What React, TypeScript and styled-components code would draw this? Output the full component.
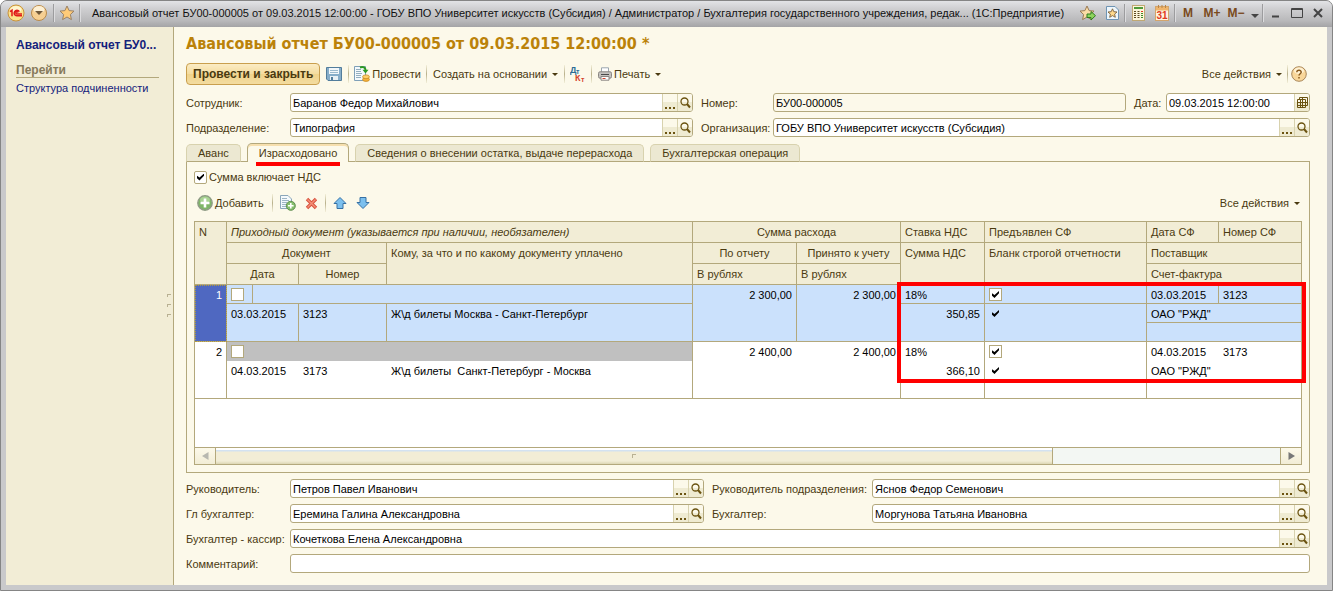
import React from "react";
import styled, { createGlobalStyle, css } from "styled-components";

const c = {
  line: "#b3a87c",
  soft: "#d8d2ae",
  page: "#fcf9ea",
  head: "#f2edd6",
  text: "#4a3a10",
  red: "#ff0000",
  selected: "#cbe1fc",
};

const Global = createGlobalStyle`
  *, *::before, *::after { box-sizing: border-box; }
  body { margin: 0; background: #fff; font: 11px/14px "Liberation Sans", Arial, sans-serif; color: ${c.text}; }
  button, input { font: inherit; color: inherit; margin: 0; }
  h1, h2 { margin: 0; }
`;

const Window = styled.div`
  min-height: 100vh;
  display: flex;
  flex-direction: column;
  border: 1px solid #858585;
  border-radius: 7px 7px 0 0;
  background: #c9c9cb;
  overflow: hidden;
`;

const TitleBar = styled.header`
  display: flex;
  align-items: center;
  height: 26px;
  padding: 0 2px 2px 6px;
  background: linear-gradient(#e2e3e6 0, #cfcfd1 30%, #b9b9bb 75%, #a4a4a6 100%);
`;

const WindowTitle = styled.span`
  flex: 1;
  min-width: 0;
  padding-left: 11px;
  overflow: hidden;
  white-space: nowrap;
  text-overflow: ellipsis;
  color: #111;
`;

const BarButton = styled.button<{ $w?: number }>`
  display: flex;
  align-items: center;
  justify-content: center;
  flex: none;
  width: ${(p) => p.$w ?? 24}px;
  height: 22px;
  padding: 0;
  border: 0;
  background: none;
  font-weight: bold;
  font-size: 12px;
  color: #7a4a1c;
  svg { display: block; }
`;

const BarDivider = styled.span`
  flex: none;
  width: 2px;
  height: 18px;
  background: linear-gradient(to right, #9c9c9e 50%, #dcdcde 50%);
`;

const Body = styled.div`
  flex: 1;
  display: flex;
  margin: 0 5px 5px;
  background: ${c.page};
`;

const Sidebar = styled.nav`
  display: flex;
  flex-direction: column;
  flex: none;
  width: 168px;
  padding: 11px 14px 0 10px;
  border-right: 1px solid ${c.line};
  background: ${c.head};
  position: relative;
`;

const SideTitle = styled.h2`
  white-space: nowrap;
  font-size: 12px;
  line-height: 14px;
  color: #14227c;
`;

const SideGroup = styled.div`
  margin: 11px 0 3px;
  border-bottom: 1px solid ${c.line};
  font-weight: bold;
  font-size: 12px;
  line-height: 14px;
  color: #86795a;
`;

const SideLink = styled.a`
  color: #14227c;
  text-decoration: none;
  white-space: nowrap;
`;

const Grip = styled.span`
  position: absolute;
  right: 2px;
  top: 267px;
  display: grid;
  gap: 7px;
  i {
    width: 4px;
    height: 3px;
    border: 1px solid #b9b193;
    border-width: 1px 0 0 1px;
  }
`;

const Main = styled.main`
  flex: 1;
  min-width: 0;
  display: flex;
  flex-direction: column;
  padding: 6px 17px 12px 12px;
`;

const PageTitle = styled.h1`
  font: bold 16px/22px "DejaVu Sans Condensed", "DejaVu Sans", sans-serif;
  color: #bb8209;
  white-space: nowrap;
`;

const Toolbar = styled.div`
  display: flex;
  align-items: center;
  height: 22px;
`;

const MainToolbar = styled(Toolbar)`
  margin: 8px 0;
`;

const TableToolbar = styled(Toolbar)`
  gap: 5px;
  margin: 8px 0 7px;
`;

const Spacer = styled.span`
  flex: 1;
`;

const ToolButton = styled.button<{ $pad?: number }>`
  display: flex;
  align-items: center;
  gap: 2px;
  height: 22px;
  padding: 0 ${(p) => p.$pad ?? 5}px;
  border: 0;
  background: none;
  white-space: nowrap;
  svg { display: block; flex: none; }
`;

const PrimaryButton = styled.button`
  height: 22px;
  padding: 0 6px;
  border: 1px solid #c99f4d;
  border-radius: 4px;
  background: linear-gradient(#fbecc4, #f4dc9e 50%, #f0d38b 50%, #f3dca0);
  font-weight: bold;
  font-size: 12px;
  white-space: nowrap;
`;

const Divider = styled.span`
  width: 1px;
  height: 18px;
  background: linear-gradient(#f3efd9, #b9b18c 50%, #f3efd9);
`;

const Caret = styled.span`
  border: 3px solid transparent;
  border-top-color: ${c.text};
  border-bottom: 0;
  margin-left: 3px;
`;

const FieldGrid = styled.div<{ $cols: string }>`
  display: grid;
  grid-template-columns: ${(p) => p.$cols};
  gap: 6px 8px;
`;

const Cell = styled.div<{ $wide?: boolean }>`
  display: flex;
  align-items: center;
  min-width: 0;
  ${(p) => p.$wide && css`grid-column: 1 / -1;`}
`;

const DateCell = styled.div`
  display: flex;
  align-items: center;
  flex: none;
  margin-left: 8px;
`;

const Label = styled.label<{ $w: number }>`
  flex: none;
  width: ${(p) => p.$w}px;
  white-space: nowrap;
`;

const Box = styled.div<{ $w?: number; $readOnly?: boolean }>`
  display: flex;
  flex: ${(p) => (p.$w ? `0 0 ${p.$w}px` : "1")};
  min-width: 0;
  height: 19px;
  border: 1px solid ${c.line};
  border-radius: 3px;
  background: ${(p) => (p.$readOnly ? c.page : "#fff")};
  overflow: hidden;
`;

const TextInput = styled.input`
  flex: 1;
  min-width: 0;
  padding: 0 2px;
  border: 0;
  outline: 0;
  background: none;
  color: #000;
`;

const BoxButton = styled.button`
  display: flex;
  align-items: center;
  justify-content: center;
  flex: none;
  width: 15px;
  padding: 0;
  border: 0;
  border-left: 1px solid ${c.soft};
  background: linear-gradient(${c.page} 45%, #efebd2 50%);
`;

const Tabs = styled.div`
  display: flex;
  align-items: flex-end;
  gap: 6px;
  height: 19px;
  margin: 6px 0 -1px;
  position: relative;
`;

const Tab = styled.button<{ $active?: boolean }>`
  height: ${(p) => (p.$active ? 19 : 18)}px;
  padding: 0 11px;
  border: 1px solid ${(p) => (p.$active ? c.line : c.soft)};
  border-bottom: ${(p) => (p.$active ? "0" : `1px solid ${c.line}`)};
  border-radius: 5px 5px 0 0;
  background: ${(p) => (p.$active ? c.page : "#ece8d2")};
  box-shadow: ${(p) => (p.$active ? "inset 0 2px #f6dfae" : "none")};
  position: relative;
  white-space: nowrap;
`;

const Underline = styled.span`
  position: absolute;
  left: 8px;
  right: 8px;
  bottom: -4px;
  height: 4px;
  background: ${c.red};
`;

const Panel = styled.section`
  flex: 1;
  display: flex;
  flex-direction: column;
  padding: 8px 7px 7px;
  margin-bottom: 6px;
  border: 1px solid ${c.line};
`;

const CheckLabel = styled.label`
  display: flex;
  align-items: center;
  gap: 2px;
`;

const Check = styled.input.attrs({ type: "checkbox" })<{ $bare?: boolean; $round?: boolean }>`
  appearance: none;
  flex: none;
  display: block;
  width: 13px;
  height: 13px;
  border: 1px solid ${(p) => (p.$bare ? "transparent" : c.line)};
  border-radius: ${(p) => (p.$round ? 2 : 0)}px;
  background-color: ${(p) => (p.$bare ? "transparent" : "#fff")};
  position: relative;
  &:checked::after {
    content: "";
    position: absolute;
    inset: 2px;
    background: #000;
    clip-path: polygon(0 32%, 36% 58%, 100% 0, 100% 32%, 36% 100%, 0 68%);
  }
`;

const TableFrame = styled.div`
  flex: 1;
  display: flex;
  flex-direction: column;
  border: 1px solid ${c.line};
  background: #fff;
  position: relative;
`;

const Table = styled.table`
  width: 100%;
  table-layout: fixed;
  border-collapse: separate;
  border-spacing: 0;
`;

const Th = styled.th<{ $center?: boolean; $last?: boolean }>`
  height: 21px;
  padding: 3px 4px 2px;
  border: 0 solid ${c.line};
  border-width: 0 ${(p) => (p.$last ? 0 : 1)}px 1px 0;
  background: ${c.head};
  font-weight: normal;
  text-align: ${(p) => (p.$center ? "center" : "left")};
  vertical-align: top;
  white-space: nowrap;
  line-height: 15px;
`;

// A missing grid line is made up for in the padding, so texts line up between rows.
type TdProps = { $right?: boolean; $r?: boolean; $b?: boolean; $bg?: string };
const Td = styled.td<TdProps>`
  height: 19px;
  padding: 3px ${(p) => (p.$r ? 4 : 5)}px ${(p) => (p.$b ? 1 : 2)}px 4px;
  border: 0 solid ${c.line};
  border-right-width: ${(p) => (p.$r ? 1 : 0)}px;
  border-bottom-width: ${(p) => (p.$b ? 1 : 0)}px;
  background: ${(p) => p.$bg ?? "transparent"};
  color: #000;
  text-align: ${(p) => (p.$right ? "right" : "left")};
  vertical-align: top;
  white-space: pre;
  line-height: 14px;
`;

const NumberTd = styled(Td)<{ $current?: boolean }>`
  ${(p) =>
    p.$current &&
    css`
      background: #4f68c1;
      color: #fff;
      outline: 1px dotted #b39a3c;
      outline-offset: -1px;
    `}
`;

const Highlight = styled.div`
  position: absolute;
  top: 60px;
  right: -5px;
  width: 409px;
  height: 101px;
  border: 4px solid ${c.red};
  pointer-events: none;
`;

const ScrollBar = styled.div`
  display: flex;
  height: 17px;
  margin-top: auto;
  border-top: 1px solid ${c.line};
  background: #f3f7f3;
`;

const ScrollButton = styled.button`
  width: 20px;
  padding: 0;
  border: 0;
  background: linear-gradient(${c.page}, ${c.head});
  display: flex;
  align-items: center;
  justify-content: center;
`;

const ScrollTrack = styled.div`
  flex: 1;
  display: flex;
  border: 1px solid ${c.line};
  border-width: 0 1px;
`;

const ScrollThumb = styled.div`
  flex: 0 0 78.7%;
  border-right: 1px solid ${c.line};
  background: linear-gradient(#fff 2px, #d3e2f1 2px 3px, ${c.head} 4px 13px, #dcd6b3);
  display: flex;
  align-items: center;
  justify-content: center;
  i {
    width: 4px;
    height: 4px;
    border: 1px solid #b9b193;
    border-width: 1px 0 0 1px;
  }
`;

const STAR = "M8 1 L10.1 5.6 L15 6.1 L11.4 9.5 L12.4 14.6 L8 12 L3.6 14.6 L4.6 9.5 L1 6.1 L5.9 5.6 Z";

const LogoIcon = () => (
  <svg width="18" height="18" viewBox="0 0 18 18">
    <circle cx="9" cy="9" r="8" fill="#fbe28a" stroke="#c8923c" />
    <ellipse cx="9" cy="5.5" rx="5.5" ry="3.5" fill="#fff6cf" />
    <path d="M3 7.6 L5 6.2 V12.2 M12.4 7.6 A2.8 2.8 0 1 0 9.8 11.8 H15 M11 8.6 A1.1 1.1 0 1 0 9.8 9.9 H15" fill="none" stroke="#e01b1b" strokeWidth="1.5" />
  </svg>
);
const MenuIcon = () => (
  <svg width="18" height="18" viewBox="0 0 18 18">
    <circle cx="9" cy="9" r="7.5" fill="#f6cf92" stroke="#b98a4a" />
    <ellipse cx="9" cy="5.5" rx="5.5" ry="3.5" fill="#fdf0d4" />
    <path d="M5 7 H13 L9 11Z" fill="#6f5738" />
  </svg>
);
const StarIcon = () => (
  <svg width="16" height="16" viewBox="0 0 16 16">
    <path d={STAR} fill="#ffcb78" stroke="#9a8266" />
  </svg>
);
const StarAddIcon = () => (
  <svg width="18" height="16" viewBox="0 0 18 16">
    <path d={STAR} fill="#fbdca6" stroke="#9a7b55" />
    <path d="M8 9 H12 V6.5 L16.5 10.7 L12 15 V12.5 H8Z" fill="#8ed35c" stroke="#2f7d1e" />
  </svg>
);
const StarPageIcon = () => (
  <svg width="13" height="16" viewBox="0 0 13 16">
    <path d="M.5 1.5 H9 L12.5 5 V14.5 H.5Z" fill="#eef6fb" stroke="#6e94b4" />
    <path d="M6.5 3.8 L7.8 6.7 L11 7 L8.6 9.1 L9.3 12.3 L6.5 10.6 L3.7 12.3 L4.4 9.1 L2 7 L5.2 6.7Z" fill="#ffd98c" stroke="#7a5f3a" strokeWidth=".9" />
  </svg>
);
const CalcIcon = () => (
  <svg width="13" height="16" viewBox="0 0 13 16">
    <rect x=".5" y=".5" width="12" height="15" fill="#fdf6da" stroke="#c0a873" />
    <rect x="2" y="2" width="9" height="2" fill="#4f9a3a" />
    {[6.5, 8.5, 10.5, 12.5].map((y) => (
      <path key={y} d={`M2 ${y}h2m1.5 0h2`} stroke="#5d4a20" />
    ))}
    <path d="M9 6.5h2" stroke="#e03a22" />
    <path d="M9 8.5h2M9 10.5h2M9 12.5h2" stroke="#3f8a2a" />
  </svg>
);
const CalendarIcon = () => (
  <svg width="14" height="16" viewBox="0 0 14 16">
    <rect x=".5" y="1.5" width="13" height="14" fill="#fff4e0" stroke="#d3a56c" />
    <rect x="1" y="2" width="12" height="3.5" fill="#f0b56c" />
    <path d="M3.5 0v3M7 0v3M10.5 0v3" stroke="#b98548" />
    <text x="7" y="14" textAnchor="middle" fontSize="10" fontFamily="Liberation Sans" fill="#e03a22">31</text>
  </svg>
);
const SaveIcon = () => (
  <svg width="16" height="16" viewBox="0 0 16 16">
    <path d="M.5 1.5 H15.5 V14.5 H2 L.5 13Z" fill="#86adc9" stroke="#527d9c" />
    <rect x="3" y="2" width="10" height="6" fill="#f2f7fa" />
    <path d="M4 4.5h8M4 6.5h8" stroke="#9bb9cd" />
    <rect x="4" y="10" width="8" height="4" fill="#e8f0f5" />
    <rect x="5" y="11" width="2" height="3" fill="#527d9c" />
  </svg>
);
const PostIcon = () => (
  <svg width="16" height="16" viewBox="0 0 16 16">
    <path d="M.5 .5 H11.5 V14.5 H.5Z" fill="#f4f9fc" stroke="#7fa0b8" />
    <path d="M2 3.5h5M2 5.5h5M2 7.5h6M2 9.5h5M2 11.5h5" stroke="#93aebf" />
    <path d="M6 1.5 C9 .5 11.5 1.5 11.5 4" fill="none" stroke="#2d9a22" strokeWidth="2" />
    <path d="M8.5 3.8 H14.5 L11.5 7.5Z" fill="#2d9a22" />
    <ellipse cx="12" cy="13.5" rx="3.4" ry="1.9" fill="#f5b13c" stroke="#c98a20" strokeWidth=".8" />
    <ellipse cx="12" cy="10.8" rx="3.4" ry="1.9" fill="#ffcf6a" stroke="#c98a20" strokeWidth=".8" />
  </svg>
);
const DtKtIcon = () => (
  <svg width="16" height="16" viewBox="0 0 16 16" fontFamily="Liberation Sans" fontWeight="bold">
    <text x="0" y="7" fontSize="9" fill="#2c6c96">Д</text>
    <text x="6" y="8" fontSize="7" fill="#2c6c96">т</text>
    <text x="5" y="15" fontSize="9" fill="#d5432c">К</text>
    <text x="11" y="16" fontSize="7" fill="#d5432c">т</text>
  </svg>
);
const PrintIcon = () => (
  <svg width="14" height="14" viewBox="0 0 14 14">
    <path d="M3.5 6 V.8 H10.5 V6" fill="#fff" stroke="#9aa5ae" />
    <rect x=".5" y="4.8" width="13" height="6.4" rx="1.5" fill="#c4c2bf" stroke="#8a8682" />
    <path d="M3 7.5h8" stroke="#4a4a4a" />
    <path d="M3 9.5 H11 V13.2 H3Z" fill="#fff" stroke="#8a8682" />
    <path d="M4.5 11.5h3" stroke="#d5432c" />
  </svg>
);
const HelpIcon = () => (
  <svg width="16" height="16" viewBox="0 0 16 16">
    <circle cx="8" cy="8" r="7.3" fill="#f9d79a" stroke="#a8865a" />
    <ellipse cx="8" cy="4.8" rx="5" ry="3.2" fill="#fff1d2" />
    <path d="M5.8 6.2 C5.8 3.4 10.3 3.6 10.2 6.2 C10.1 7.8 8 7.8 8 9.6 M8 11v1.6" fill="none" stroke="#8a5a1c" strokeWidth="1.5" />
  </svg>
);
const SearchIcon = () => (
  <svg width="11" height="12" viewBox="0 0 11 12">
    <circle cx="4.5" cy="4.5" r="3.5" fill="none" stroke="#6b5310" strokeWidth="1.3" />
    <path d="M7 7 L10 10.5" stroke="#6b5310" strokeWidth="2" />
  </svg>
);
const DotsIcon = () => (
  <svg width="10" height="12" viewBox="0 0 10 12">
    <path d="M0 10h2v2H0zM4 10h2v2H4zM8 10h2v2H8z" fill="#6b5310" />
  </svg>
);
const DateIcon = () => (
  <svg width="11" height="11" viewBox="0 0 11 11">
    <path d="M2.5 2.5v-2h8v8h-2M.5 2.5h8v8h-8zM.5 5.5h10M.5 8.5h8M3.5 2.5v8M5.5 .5v10" fill="none" stroke="#6b5310" />
  </svg>
);
const AddIcon = () => (
  <svg width="16" height="16" viewBox="0 0 16 16">
    <circle cx="8" cy="8" r="7.2" fill="#7fb668" stroke="#8f9b86" strokeWidth="1.4" />
    <ellipse cx="8" cy="5" rx="5" ry="3.4" fill="#a9d394" />
    <path d="M8 3.5v9M3.5 8h9" stroke="#fff" strokeWidth="2.6" />
  </svg>
);
const CopyIcon = () => (
  <svg width="16" height="16" viewBox="0 0 16 16">
    <path d="M.5 .5 H8 L11.5 4 V13.5 H.5Z" fill="#f4f9fc" stroke="#8aa6ba" />
    <path d="M2 3.5h5M2 5.5h7M2 7.5h5M2 9.5h4M2 11.5h4" stroke="#9db5c5" />
    <circle cx="10.8" cy="10.8" r="4.5" fill="#86bf6c" stroke="#5f8d50" />
    <path d="M10.8 8v5.6M8 10.8h5.6" stroke="#fff" strokeWidth="1.6" />
  </svg>
);
const DeleteIcon = () => (
  <svg width="13" height="13" viewBox="0 0 13 13">
    <path d="M2 2 L11 11 M11 2 L2 11" stroke="#d8513e" strokeWidth="3.4" />
    <path d="M2.5 2.5 L10.5 10.5 M10.5 2.5 L2.5 10.5" stroke="#f49078" strokeWidth="1.4" />
  </svg>
);
const ArrowIcon = ({ down }: { down?: boolean }) => (
  <svg width="14" height="14" viewBox="0 0 14 14">
    <path
      d={down ? "M4 1.5 H10 V6.5 H13 L7 12.5 L1 6.5 H4Z" : "M4 12.5 H10 V7.5 H13 L7 1.5 L1 7.5 H4Z"}
      fill="#7cc0ee"
      stroke="#3670a4"
    />
  </svg>
);

type FieldProps = {
  id: string;
  label: string;
  labelWidth: number;
  value: string;
  picker?: "ref" | "date";
  width?: number;
  readOnly?: boolean;
};

const Field = ({ id, label, labelWidth, value, picker, width, readOnly }: FieldProps) => (
  <>
    <Label htmlFor={id} $w={labelWidth}>{label}</Label>
    <Box $w={width} $readOnly={readOnly}>
      <TextInput id={id} defaultValue={value} readOnly={readOnly} />
      {picker === "ref" && (
        <>
          <BoxButton aria-label="Выбрать"><DotsIcon /></BoxButton>
          <BoxButton aria-label="Открыть"><SearchIcon /></BoxButton>
        </>
      )}
      {picker === "date" && <BoxButton aria-label="Календарь"><DateIcon /></BoxButton>}
    </Box>
  </>
);

const rows = [
  { n: 1, current: true, date: "03.03.2015", num: "3123", text: "Ж\\д билеты Москва - Санкт-Петербург", sum: "2 300,00", vat: "350,85" },
  { n: 2, current: false, date: "04.03.2015", num: "3173", text: "Ж\\д билеты  Санкт-Петербург - Москва", sum: "2 400,00", vat: "366,10" },
];

// The zero-width entry takes whatever room the other columns leave.
const columns = [32, 26, 46, 88, 0, 104, 104, 84, 162, 72, 82];

const RowGroup = ({ row }: { row: (typeof rows)[number] }) => {
  const on = row.current;
  const bg = on ? c.selected : undefined;
  const docBg = on ? c.selected : "#c0c0c0";
  return (
    <tbody>
      <tr>
        <NumberTd rowSpan={3} $right $r $b $current={on}>{row.n}</NumberTd>
        <Td $bg={docBg} $r={on} $b={on}><Check aria-label="Приходный документ" /></Td>
        <Td colSpan={3} $bg={docBg} $r $b={on} />
        <Td rowSpan={3} $bg={bg} $right $r={on} $b>{row.sum}</Td>
        <Td rowSpan={3} $bg={bg} $right $r $b>{row.sum}</Td>
        <Td $bg={bg} $r $b={on}>18%</Td>
        <Td $bg={bg} $r $b={on}><Check defaultChecked aria-label="Предъявлен СФ" /></Td>
        <Td $bg={bg} $r={on} $b={on}>{row.date}</Td>
        <Td $bg={bg} $b={on}>{row.num}</Td>
      </tr>
      <tr>
        <Td rowSpan={2} colSpan={2} $bg={bg} $r={on} $b>{row.date}</Td>
        <Td rowSpan={2} $bg={bg} $r={on} $b>{row.num}</Td>
        <Td rowSpan={2} $bg={bg} $r $b>{row.text}</Td>
        <Td rowSpan={2} $bg={bg} $right $r $b>{row.vat}</Td>
        <Td rowSpan={2} $bg={bg} $r $b><Check $bare defaultChecked aria-label="Бланк строгой отчетности" /></Td>
        <Td colSpan={2} $bg={bg} $b={on}>ОАО "РЖД"</Td>
      </tr>
      <tr>
        <Td colSpan={2} $bg={bg} $b />
      </tr>
    </tbody>
  );
};

export default function App() {
  return (
    <Window>
      <Global />
      <TitleBar>
        <BarButton $w={18} aria-label="1С"><LogoIcon /></BarButton>
        <BarButton $w={28} aria-label="Меню"><MenuIcon /></BarButton>
        <BarDivider />
        <BarButton aria-label="Избранное"><StarIcon /></BarButton>
        <BarDivider />
        <WindowTitle>
          Авансовый отчет БУ00-000005 от 09.03.2015 12:00:00 - ГОБУ ВПО Университет искусств (Субсидия) / Администратор / Бухгалтерия государственного учреждения, редак... (1С:Предприятие)
        </WindowTitle>
        <BarButton aria-label="Добавить в избранное"><StarAddIcon /></BarButton>
        <BarButton aria-label="Страница избранного"><StarPageIcon /></BarButton>
        <BarDivider />
        <BarButton aria-label="Калькулятор"><CalcIcon /></BarButton>
        <BarButton aria-label="Календарь"><CalendarIcon /></BarButton>
        <BarDivider />
        <BarButton>M</BarButton>
        <BarButton>M+</BarButton>
        <BarButton>M−</BarButton>
        <BarButton $w={14} aria-label="Ещё">
          <svg width="8" height="10"><path d="M0 6H8L4 10Z" fill="#444" /></svg>
        </BarButton>
        <BarDivider />
        <BarButton aria-label="Свернуть">
          <svg width="10" height="10"><path d="M1 8.5h7" stroke="#444" strokeWidth="2" /></svg>
        </BarButton>
        <BarButton $w={18} aria-label="Развернуть">
          <svg width="12" height="10"><path d="M.5 .5h11v9H.5zM.5 1.5h11" fill="none" stroke="#444" /></svg>
        </BarButton>
        <BarButton aria-label="Закрыть">
          <svg width="10" height="10"><path d="M1 1l8 8M9 1L1 9" stroke="#444" strokeWidth="2" /></svg>
        </BarButton>
      </TitleBar>
      <Body>
        <Sidebar>
          <SideTitle>Авансовый отчет БУ0...</SideTitle>
          <SideGroup>Перейти</SideGroup>
          <SideLink href="#structure">Структура подчиненности</SideLink>
          <Grip><i /><i /><i /></Grip>
        </Sidebar>
        <Main>
          <PageTitle>Авансовый отчет БУ00-000005 от 09.03.2015 12:00:00 *</PageTitle>
          <MainToolbar>
            <PrimaryButton>Провести и закрыть</PrimaryButton>
            <ToolButton $pad={6} aria-label="Записать"><SaveIcon /></ToolButton>
            <Divider />
            <ToolButton><PostIcon />Провести</ToolButton>
            <Divider />
            <ToolButton $pad={6}>Создать на основании<Caret /></ToolButton>
            <Divider />
            <ToolButton aria-label="Дт Кт"><DtKtIcon /></ToolButton>
            <Divider />
            <ToolButton $pad={6}><PrintIcon />Печать<Caret /></ToolButton>
            <Spacer />
            <ToolButton>Все действия<Caret /></ToolButton>
            <Divider />
            <ToolButton $pad={3} aria-label="Справка"><HelpIcon /></ToolButton>
          </MainToolbar>
          <FieldGrid $cols="507fr 609fr">
            <Cell><Field id="employee" label="Сотрудник:" labelWidth={104} value="Баранов Федор Михайлович" picker="ref" /></Cell>
            <Cell>
              <Field id="number" label="Номер:" labelWidth={72} value="БУ00-000005" readOnly />
              <DateCell>
                <Field id="date" label="Дата:" labelWidth={32} value="09.03.2015 12:00:00" picker="date" width={144} />
              </DateCell>
            </Cell>
            <Cell><Field id="dept" label="Подразделение:" labelWidth={104} value="Типография" picker="ref" /></Cell>
            <Cell><Field id="org" label="Организация:" labelWidth={72} value="ГОБУ ВПО Университет искусств (Субсидия)" picker="ref" /></Cell>
          </FieldGrid>
          <Tabs>
            <Tab>Аванс</Tab>
            <Tab $active>Израсходовано<Underline /></Tab>
            <Tab>Сведения о внесении остатка, выдаче перерасхода</Tab>
            <Tab>Бухгалтерская операция</Tab>
          </Tabs>
          <Panel>
            <CheckLabel><Check $round defaultChecked />Сумма включает НДС</CheckLabel>
            <TableToolbar>
              <ToolButton $pad={3}><AddIcon />Добавить</ToolButton>
              <Divider />
              <ToolButton $pad={2} aria-label="Скопировать"><CopyIcon /></ToolButton>
              <ToolButton $pad={2} aria-label="Удалить"><DeleteIcon /></ToolButton>
              <Divider />
              <ToolButton $pad={2} aria-label="Вверх"><ArrowIcon /></ToolButton>
              <ToolButton $pad={2} aria-label="Вниз"><ArrowIcon down /></ToolButton>
              <Spacer />
              <ToolButton $pad={2}>Все действия<Caret /></ToolButton>
            </TableToolbar>
            <TableFrame>
              <Table>
                <colgroup>
                  {columns.map((w, i) => (
                    <col key={i} width={w || undefined} />
                  ))}
                </colgroup>
                <thead>
                  <tr>
                    <Th rowSpan={3}>N</Th>
                    <Th colSpan={4}><em>Приходный документ (указывается при наличии, необязателен)</em></Th>
                    <Th colSpan={2} $center>Сумма расхода</Th>
                    <Th>Ставка НДС</Th>
                    <Th>Предъявлен СФ</Th>
                    <Th>Дата СФ</Th>
                    <Th $last>Номер СФ</Th>
                  </tr>
                  <tr>
                    <Th colSpan={3} $center>Документ</Th>
                    <Th rowSpan={2}>Кому, за что и по какому документу уплачено</Th>
                    <Th $center>По отчету</Th>
                    <Th $center>Принято к учету</Th>
                    <Th rowSpan={2}>Сумма НДС</Th>
                    <Th rowSpan={2}>Бланк строгой отчетности</Th>
                    <Th colSpan={2} $last>Поставщик</Th>
                  </tr>
                  <tr>
                    <Th colSpan={2} $center>Дата</Th>
                    <Th $center>Номер</Th>
                    <Th>В рублях</Th>
                    <Th>В рублях</Th>
                    <Th colSpan={2} $last>Счет-фактура</Th>
                  </tr>
                </thead>
                {rows.map((row) => <RowGroup key={row.n} row={row} />)}
              </Table>
              <ScrollBar>
                <ScrollButton aria-label="Влево">
                  <svg width="7" height="8"><path d="M6.5 0V8L0 4Z" fill="#b8b8b0" /></svg>
                </ScrollButton>
                <ScrollTrack><ScrollThumb><i /></ScrollThumb></ScrollTrack>
                <ScrollButton aria-label="Вправо">
                  <svg width="7" height="8"><path d="M.5 0V8L7 4Z" fill="#777" /></svg>
                </ScrollButton>
              </ScrollBar>
              <Highlight />
            </TableFrame>
          </Panel>
          <FieldGrid $cols="518fr 598fr">
            <Cell><Field id="head" label="Руководитель:" labelWidth={104} value="Петров Павел Иванович" picker="ref" /></Cell>
            <Cell><Field id="depthead" label="Руководитель подразделения:" labelWidth={160} value="Яснов Федор Семенович" picker="ref" /></Cell>
            <Cell><Field id="chief" label="Гл бухгалтер:" labelWidth={104} value="Еремина Галина Александровна" picker="ref" /></Cell>
            <Cell><Field id="accountant" label="Бухгалтер:" labelWidth={160} value="Моргунова Татьяна Ивановна" picker="ref" /></Cell>
            <Cell $wide><Field id="cashier" label="Бухгалтер - кассир:" labelWidth={104} value="Кочеткова Елена Александровна" picker="ref" /></Cell>
            <Cell $wide><Field id="comment" label="Комментарий:" labelWidth={104} value="" /></Cell>
          </FieldGrid>
        </Main>
      </Body>
    </Window>
  );
}
